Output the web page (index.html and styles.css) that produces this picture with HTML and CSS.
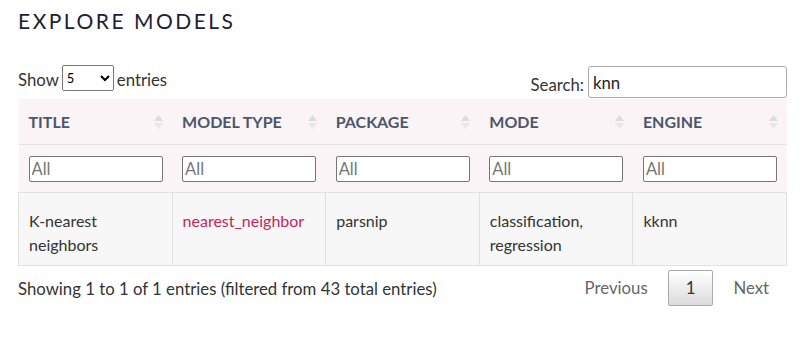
FILE: index.html
```html
<!DOCTYPE html>
<html lang="en">
<head>
    <meta charset="UTF-8">
    <meta name="viewport" content="width=device-width, initial-scale=1.0">
    <title>Explore Models</title>
    <link rel="stylesheet" href="styles.css">
</head>
<body>

<h1>Explore Models</h1>

<div class="controls">
    <label class="length">
        Show
        <select>
            <option>5</option>
            <option>10</option>
            <option>25</option>
        </select>
        entries
    </label>
    <label class="search">
        Search:
        <input type="search" value="knn">
    </label>
</div>

<table class="models">
    <thead>
        <tr class="heads">
            <th><div class="th-inner">Title <svg class="sort" width="9" height="14" viewBox="0 0 9 14"><path d="M0 6 L4.5 0 L9 6 Z" fill="#dcdcdf"/><path d="M0 8 L9 8 L4.5 14 Z" fill="#e8e8ea"/></svg></div></th>
            <th><div class="th-inner">Model type <svg class="sort" width="9" height="14" viewBox="0 0 9 14"><path d="M0 6 L4.5 0 L9 6 Z" fill="#dcdcdf"/><path d="M0 8 L9 8 L4.5 14 Z" fill="#e8e8ea"/></svg></div></th>
            <th><div class="th-inner">Package <svg class="sort" width="9" height="14" viewBox="0 0 9 14"><path d="M0 6 L4.5 0 L9 6 Z" fill="#dcdcdf"/><path d="M0 8 L9 8 L4.5 14 Z" fill="#e8e8ea"/></svg></div></th>
            <th><div class="th-inner">Mode <svg class="sort" width="9" height="14" viewBox="0 0 9 14"><path d="M0 6 L4.5 0 L9 6 Z" fill="#dcdcdf"/><path d="M0 8 L9 8 L4.5 14 Z" fill="#e8e8ea"/></svg></div></th>
            <th><div class="th-inner">Engine <svg class="sort" width="9" height="14" viewBox="0 0 9 14"><path d="M0 6 L4.5 0 L9 6 Z" fill="#dcdcdf"/><path d="M0 8 L9 8 L4.5 14 Z" fill="#e8e8ea"/></svg></div></th>
        </tr>
        <tr class="filters">
            <td><input type="text" placeholder="All"></td>
            <td><input type="text" placeholder="All"></td>
            <td><input type="text" placeholder="All"></td>
            <td><input type="text" placeholder="All"></td>
            <td><input type="text" placeholder="All"></td>
        </tr>
    </thead>
    <tbody>
        <tr>
            <td>K-nearest neighbors</td>
            <td><a href="#">nearest_neighbor</a></td>
            <td>parsnip</td>
            <td>classification, regression</td>
            <td>kknn</td>
        </tr>
    </tbody>
</table>

<div class="table-foot">
    <div class="info">Showing 1 to 1 of 1 entries (filtered from 43 total entries)</div>
    <div class="paginate">
        <span class="page-btn disabled">Previous</span>
        <span class="page-btn current">1</span>
        <span class="page-btn disabled">Next</span>
    </div>
</div>

</body>
</html>
```

FILE: styles.css
```css
body {
    font-family: Lato, "Open Sans", sans-serif;
    font-size: 16.75px;
    color: #333;
    background: #fff;
    margin: 0;
    padding: 0 14px 0 18px;
}
h1 {
    margin: 8px 0 0;
    font-size: 21px;
    font-weight: 400;
    letter-spacing: 2.5px;
    text-transform: uppercase;
    color: #1f2033;
}
.controls {
    display: flex;
    justify-content: space-between;
    align-items: flex-start;
    margin-top: 33px;
}
.length, .search {
    display: flex;
    align-items: center;
    gap: 4px;
}
.length {
    padding-top: 1px;
}
.length select {
    width: 52px;
    height: 26px;
    font-family: Lato, sans-serif;
    font-size: 13px;
    margin: -2px -1px 0 -1px;
}
.search {
    padding-top: 4px;
}
.search input {
    width: 199px;
    height: 32px;
    box-sizing: border-box;
    margin-top: -4px;
    border: 1px solid #aaa;
    border-radius: 3px;
    padding: 0 4px;
    font-family: Lato, sans-serif;
    font-size: 16.75px;
    color: #222;
}
.models {
    width: 769px;
    border-collapse: collapse;
    table-layout: fixed;
    margin-top: 1px;
}
.models thead {
    background: #fbf4f6;
}
.heads th {
    padding: 11px 9px 10px 10px;
    line-height: 24px;
    font-size: 16px;
    text-align: left;
    font-weight: 700;
    text-transform: uppercase;
    color: #4b566d;
    border-bottom: 1px solid #e3e3e6;
}
.th-inner {
    display: flex;
    justify-content: space-between;
    align-items: center;
}
.sort {
    display: block;
}
.filters td {
    padding: 11px 10px 10px;
    border-bottom: 1px solid #e3e3e6;
}
.filters input {
    display: block;
    width: 134px;
    height: 26px;
    box-sizing: border-box;
    border: 1px solid #767676;
    border-radius: 2px;
    padding: 0 2px;
    font-family: Lato, sans-serif;
    font-size: 16.5px;
}
.filters input::placeholder {
    color: #757575;
}
tbody td {
    background: #f7f7f7;
    border: 1px solid #e0e0e0;
    padding: 16px 10px 8px;
    line-height: 24px;
    font-size: 16px;
    vertical-align: top;
    color: #333;
}
tbody a {
    color: #c9245b;
    text-decoration: none;
}
.table-foot {
    display: flex;
    justify-content: space-between;
    align-items: center;
    width: 769px;
    padding-top: 4px;
}
.info {
    color: #333;
}
.paginate {
    display: flex;
}
.page-btn {
    padding: 8px 17px;
    line-height: 18px;
    margin-left: 2px;
    border: 1px solid transparent;
    border-radius: 2px;
    color: #666;
}
.page-btn.current {
    color: #333;
    border-color: #aaa;
    background: linear-gradient(#fff, #dcdcdc);
}
```
